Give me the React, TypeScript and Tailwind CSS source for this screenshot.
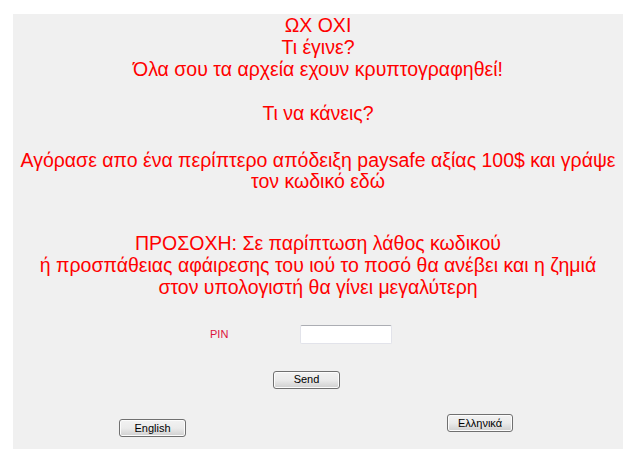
import React from "react";

const winButton =
  "h-[18px] rounded-[3px] border border-[#707070] bg-gradient-to-b from-[#f2f2f2] via-[#ebebeb] to-[#cfcfcf] text-[11px] leading-none text-black shadow-[inset_0_0_0_1px_#fcfcfc]";

export default function App() {
  return (
    <div
      className="w-[640px] h-[468px] bg-white pt-[14px] pl-[13px]"
      style={{ fontFamily: '"Liberation Sans", Arial, sans-serif' }}
    >
      <div className="w-[610px] h-[435px] bg-[#f0f0f0] flex flex-col">
        <div className="text-center text-[#ff0000] text-[19.5px] leading-[22px]">
          ΩΧ ΟΧΙ
          <br />
          Τι έγινε?
          <br />
          Όλα σου τα αρχεία εχουν κρυπτογραφηθεί!
          <br />
          <br />
          Τι να κάνεις?
        </div>

        <div className="mt-[26px] text-center text-[#ff0000] text-[19.5px] leading-[21px] whitespace-nowrap">
          Αγόρασε απο ένα περίπτερο απόδειξη paysafe αξίας 100$ και γράψε
          <br />
          τον κωδικό εδώ
        </div>

        <div className="mt-[40px] text-center text-[#ff0000] text-[19.5px] leading-[22px]">
          ΠΡΟΣΟΧΗ: Σε παρίπτωση λάθος κωδικού
          <br />
          ή προσπάθειας αφάιρεσης του ιού το ποσό θα ανέβει και η ζημιά
          <br />
          στον υπολογιστή θα γίνει μεγαλύτερη
        </div>

        <div className="mt-[27px] flex items-center pl-[197px]">
          <span className="w-[90px] text-[11px] text-[#dc143c]">PIN</span>
          <input
            type="text"
            className="w-[92px] h-[19px] bg-white border border-[#e2e3ea] border-t-[#abadb3] rounded-[2px] outline-none text-[11px] px-1"
          />
        </div>

        <div className="mt-[22px] pl-[260px]">
          <button className={`${winButton} w-[67px]`}>Send</button>
        </div>

        <div className="mt-[24px] flex items-start">
          <button className={`${winButton} ml-[106px] mt-[5px] w-[67px]`}>English</button>
          <button className={`${winButton} ml-[261px] w-[66px] h-[17px]`}>Ελληνικά</button>
        </div>
      </div>
    </div>
  );
}
